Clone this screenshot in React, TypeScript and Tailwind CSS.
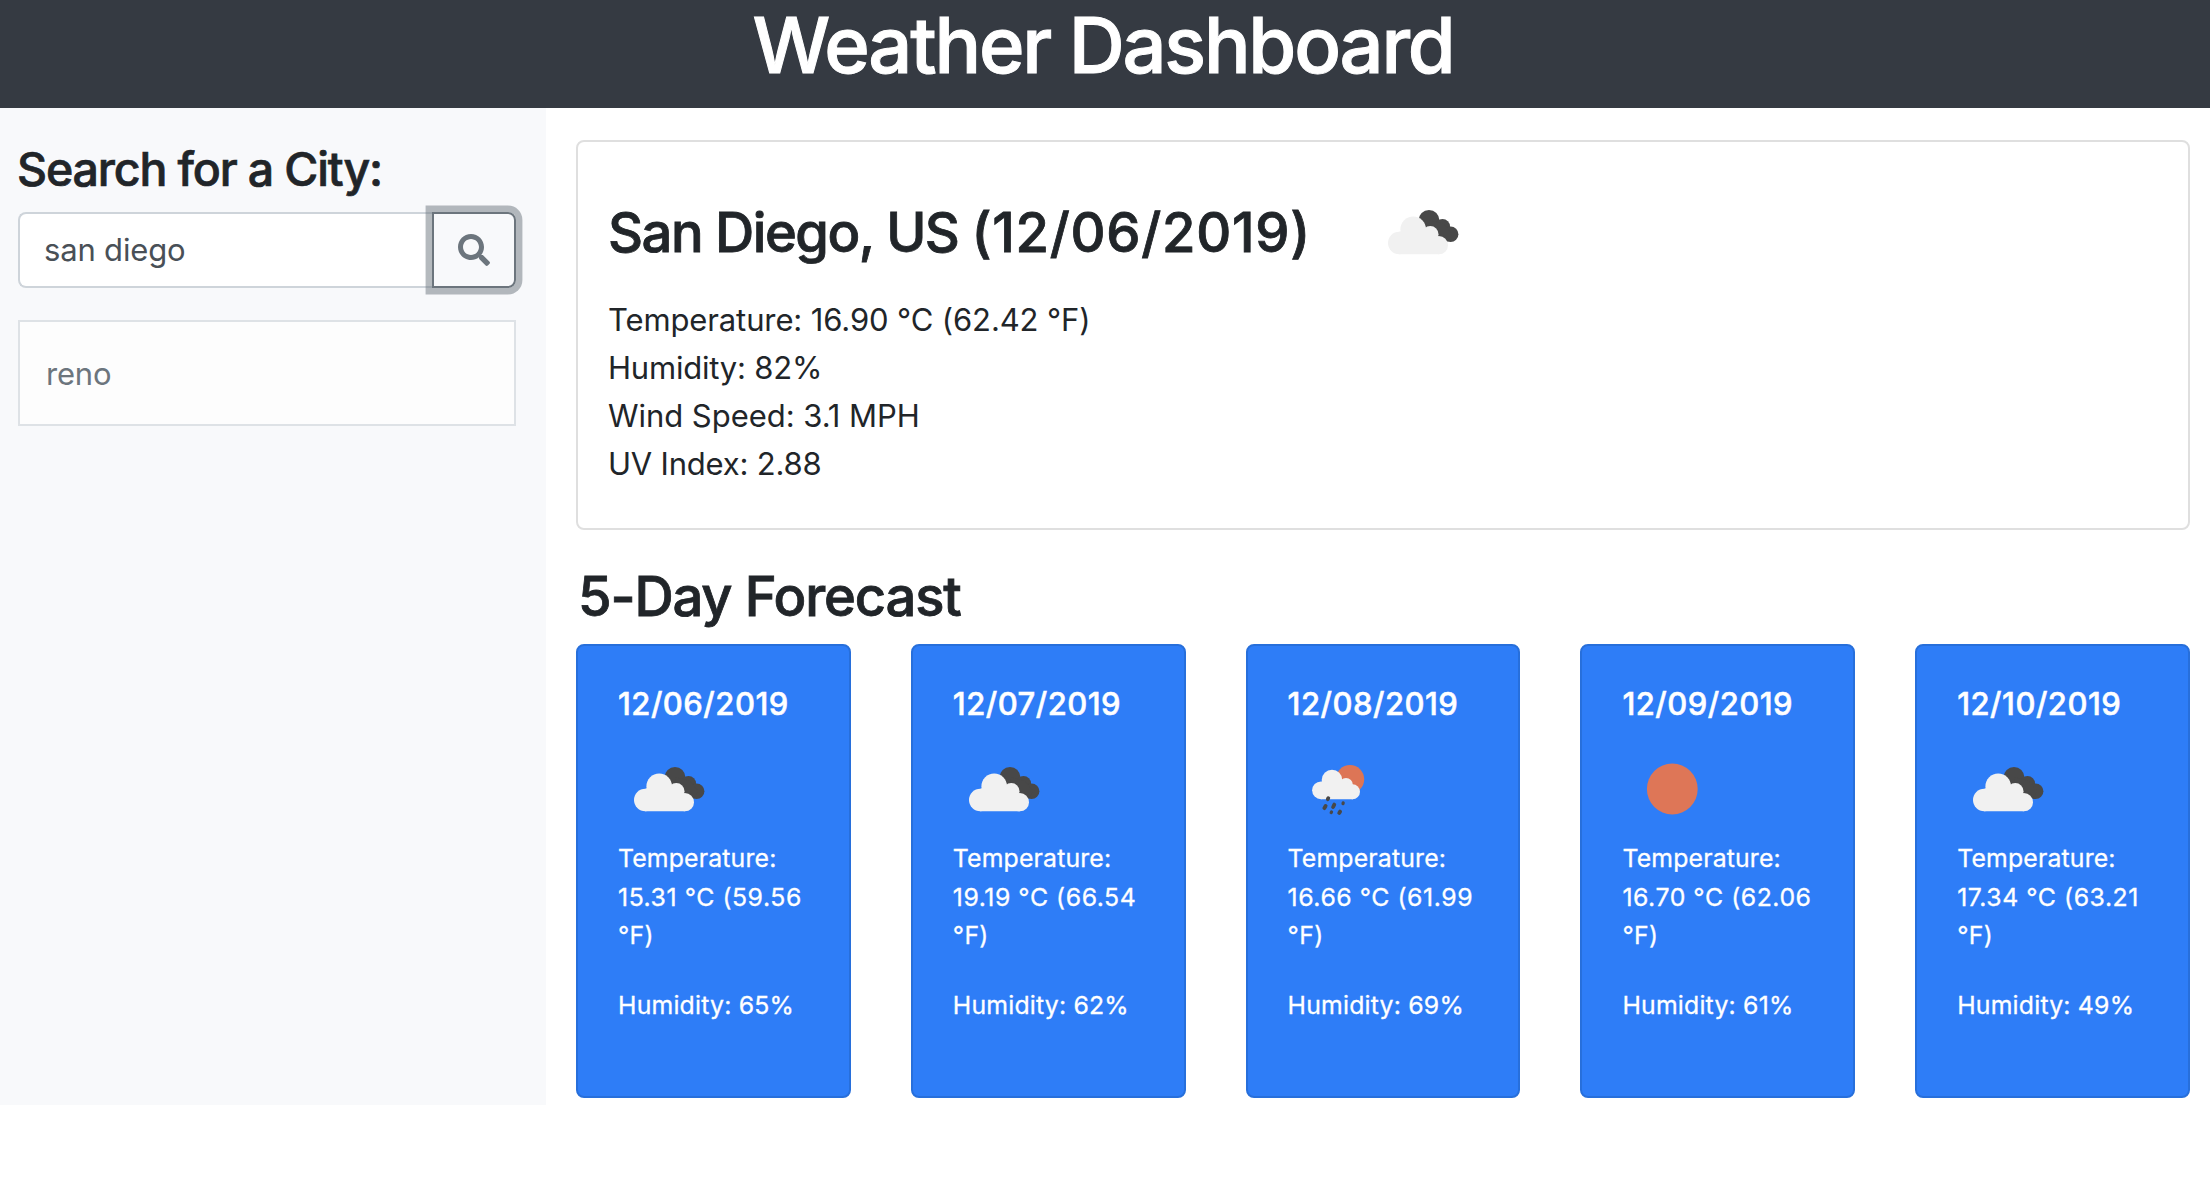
import React from "react";
import { FaSearch } from "react-icons/fa";

type IconKind = "clouds" | "rain" | "sun";

interface Day {
  date: string;
  icon: IconKind;
  temp: string;
  humidity: string;
}

const days: Day[] = [
  { date: "12/06/2019", icon: "clouds", temp: "15.31 °C (59.56", humidity: "65%" },
  { date: "12/07/2019", icon: "clouds", temp: "19.19 °C (66.54", humidity: "62%" },
  { date: "12/08/2019", icon: "rain", temp: "16.66 °C (61.99", humidity: "69%" },
  { date: "12/09/2019", icon: "sun", temp: "16.70 °C (62.06", humidity: "61%" },
  { date: "12/10/2019", icon: "clouds", temp: "17.34 °C (63.21", humidity: "49%" },
];

function WeatherIcon({ kind }: { kind: IconKind }) {
  return (
    <svg viewBox="0 0 100 100" className="block size-[100px] shrink-0">
      {kind === "clouds" && (
        <>
          <g fill="#484848">
            <circle cx="57" cy="38.3" r="10.4" />
            <circle cx="70.5" cy="44.6" r="7.6" />
            <circle cx="78.6" cy="52.2" r="7.8" />
            <path d="M57 38 L72 42 L80 52 L76 59.5 L62 56 Z" />
          </g>
          <g fill="#f1f1f1">
            <circle cx="27.3" cy="61" r="11.3" />
            <circle cx="41.2" cy="47.2" r="12.8" />
            <circle cx="58.3" cy="52.3" r="8.2" />
            <circle cx="66.9" cy="63.2" r="9.1" />
            <path d="M27 50 L41 44 L58 48 L67 56 V72.3 H27 Z" />
          </g>
        </>
      )}
      {kind === "rain" && (
        <>
          <circle cx="62" cy="40.3" r="14.2" fill="#dd7556" />
          <g fill="#f1f1f1">
            <circle cx="33" cy="51.3" r="8.9" />
            <circle cx="44" cy="41" r="10.3" />
            <circle cx="58" cy="46" r="6.9" />
            <circle cx="64.5" cy="52.7" r="7.5" />
            <path d="M33 43 L44 38 L58 42 L65 47 V60.2 H33 Z" />
          </g>
          <g stroke="#484848" strokeWidth="3.8" strokeLinecap="round">
            <path d="M39.8 60.2 L40.3 59.2" />
            <path d="M36.4 69.2 L37.6 67" />
            <path d="M45.1 68 L46.3 65.6" />
            <path d="M55 64.6 L55.2 63.8" strokeWidth="3.2" />
            <path d="M43.2 73.6 L43.5 73" strokeWidth="3.2" />
            <path d="M51.2 74 L52.1 72.6" />
          </g>
        </>
      )}
      {kind === "sun" && <circle cx="50.3" cy="50" r="25.4" fill="#de7657" />}
    </svg>
  );
}

function ForecastCard({ day }: { day: Day }) {
  return (
    <article className="h-[454px] rounded-lg border-2 border-[#276fdb] bg-[#2e7df7] px-10 pt-[39px] text-[24.8px] leading-[38.4px] text-white [-webkit-text-stroke:0.3px]">
      <h3 className="text-[31px] font-medium tracking-[0.48px] [-webkit-text-stroke:0.5px]">{day.date}</h3>
      <div className="mt-4">
        <WeatherIcon kind={day.icon} />
      </div>
      <div className="whitespace-nowrap">
        <p className="tracking-[0.17px]">Temperature:</p>
        <p className="tracking-[0.55px]">{day.temp}</p>
        <p className="tracking-[0.3px]">°F)</p>
      </div>
      <p className="mt-[31px] tracking-[0.2px]">Humidity: {day.humidity}</p>
    </article>
  );
}

export default function App() {
  return (
    <div className="min-h-[1200px] bg-white font-[Inter,sans-serif] text-[#212529]">
      <header className="flex h-[108px] justify-center bg-[#353a42] pr-1">
        <h1 className="text-[77.6px] leading-[90px] font-medium tracking-[-2.2px] text-white [-webkit-text-stroke:1px]">
          Weather Dashboard
        </h1>
      </header>
      <div className="flex">
        <aside className="h-[997px] w-[546px] shrink-0 bg-[#f8f9fb] pr-[30px] pl-[17px]">
          <h2 className="pt-[33px] text-[46.5px] leading-[57.6px] font-medium tracking-[-1.15px] [-webkit-text-stroke:0.7px]">
            Search for a City:
          </h2>
          <div className="mt-[13px] ml-px flex h-[76px]">
            <input
              className="min-w-0 flex-1 rounded-l-lg border-2 border-r-0 border-[#ced4da] bg-white px-6 pt-0.5 text-[31px] tracking-[-0.17px] text-[#495057] outline-none"
              defaultValue="san diego"
            />
            <button
              aria-label="Search"
              className="relative flex w-[84px] items-center justify-center rounded-r-lg border-2 border-[#6c757d] text-[#6c757d] shadow-[0_0_0_6.4px_rgba(108,117,125,0.5)]"
            >
              <FaSearch className="size-8" />
            </button>
          </div>
          <div className="mt-8 ml-px flex h-[106px] items-center border-2 border-[#dee2e6] bg-[#fdfdfd] px-[26px] pt-1 text-[31px] tracking-[-0.2px] text-[#6c757d]">
            reno
          </div>
        </aside>
        <main className="flex-1 pt-8 pr-5 pl-[30px]">
          <section className="h-[390px] rounded-lg border-2 border-[#dfdfdf] px-[30px] pt-10">
            <div className="flex h-[114px]">
              <h2 className="w-[764px] shrink-0 pt-[17px] text-[54.3px] leading-[67.2px] font-medium whitespace-pre [-webkit-text-stroke:0.8px]">
                <span className="tracking-[-1.5px]">San Diego, US </span>
                <span className="tracking-[0.75px]">(12/06/2019)</span>
              </h2>
              <WeatherIcon kind="clouds" />
            </div>
            <div className="text-[31px] leading-[48px]">
              <p className="tracking-[-0.12px]">Temperature: 16.90 °C (62.42 °F)</p>
              <p className="tracking-[-0.2px]">Humidity: 82%</p>
              <p className="tracking-[-0.04px]">Wind Speed: 3.1 MPH</p>
              <p className="tracking-[-0.2px]">UV Index: 2.88</p>
            </div>
          </section>
          <h2 className="mt-[33px] pl-0.5 text-[54.3px] leading-[67.2px] font-medium tracking-[-1.14px] [-webkit-text-stroke:0.8px]">
            5-Day Forecast
          </h2>
          <div className="mt-[13.8px] grid grid-cols-5 gap-[60px]">
            {days.map((d) => (
              <ForecastCard key={d.date} day={d} />
            ))}
          </div>
        </main>
      </div>
    </div>
  );
}
